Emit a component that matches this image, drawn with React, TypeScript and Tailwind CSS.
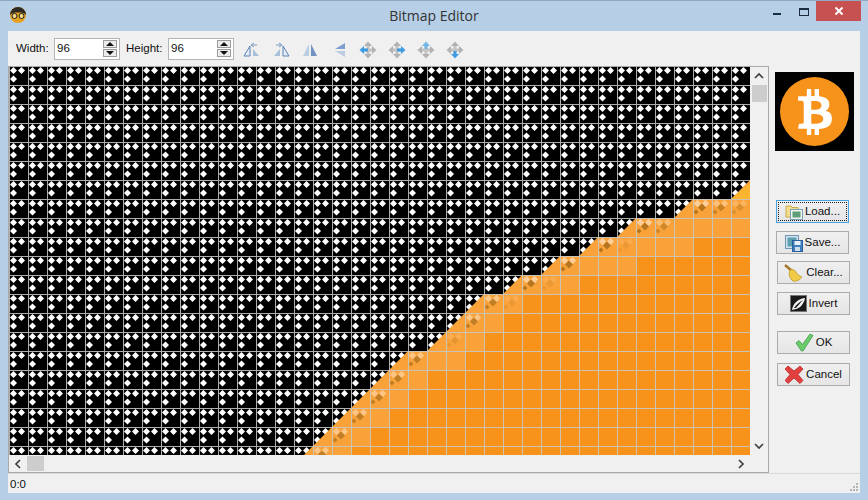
import React from 'react';
import { FaBtc } from 'react-icons/fa';

const CELL = 19;
const ROW_Y = (r: number) => CELL * r - 1;

// first column of the orange edge per row (r = index + 6)
const edge = [38, 35, 32, 30, 28, 26, 24, 23, 22, 20, 19, 18, 17, 16, 15];

// [row, col, strength] half transparent cells along the edge
const half: [number, number, number][] = [
  [7, 36, 1], [7, 37, 0.7], [7, 38, 0.4], [8, 33, 1], [8, 34, 0.6], [9, 31, 1], [9, 32, 0.2],
  [10, 29, 1], [11, 27, 1], [11, 28, 0.2], [12, 25, 0.8], [12, 26, 0.2], [13, 24, 0.8], [14, 23, 0.25],
  [15, 21, 0.8], [16, 20, 0.8], [17, 19, 0.8], [18, 18, 0.8], [19, 17, 0.8], [20, 16, 0.8],
];

// [row, first full orange column]
const full: [number, number][] = [
  [9, 36], [10, 33], [11, 30], [12, 27], [13, 26], [14, 25], [15, 24], [16, 22], [17, 21], [18, 20], [19, 19], [20, 18],
];

const diamond = (x: number, y: number, r: number) => `${x},${y - r} ${x + r},${y} ${x},${y + r} ${x - r},${y}`;

const edgePoints = () => {
  const pts: string[] = [];
  for (let i = edge.length - 1; i >= 0; i--) {
    const r = i + 6;
    pts.push(`${edge[i] * CELL},${ROW_Y(r + 1)}`);
    pts.push(`${(edge[i] + 1) * CELL},${ROW_Y(r)}`);
  }
  pts.push(`741,${ROW_Y(6)}`);
  pts.push('741,388');
  pts.push(`${edge[14] * CELL},388`);
  return pts.join(' ');
};

const BitmapGrid = () => (
  <svg width={741} height={388} className="block shrink-0">
    <defs>
      <pattern id="cells" x={0} y={-1} width={CELL} height={CELL} patternUnits="userSpaceOnUse">
        <rect width={CELL} height={CELL} fill="#000" />
        <polygon points={diamond(4.5, 4.5, 3.5)} fill="#fff" />
        <polygon points={diamond(12.5, 4.5, 3.5)} fill="#fff" />
        <polygon points={diamond(4.5, 13, 3.5)} fill="#fff" />
      </pattern>
      <pattern id="lines" x={0} y={-1} width={CELL} height={CELL} patternUnits="userSpaceOnUse">
        <rect width={CELL} height={1} fill="#aeaeae" />
        <rect width={1} height={CELL} fill="#aeaeae" />
      </pattern>
      <pattern id="linesLight" x={0} y={-1} width={CELL} height={CELL} patternUnits="userSpaceOnUse">
        <rect width={CELL} height={1} fill="#cbc3b6" />
        <rect width={1} height={CELL} fill="#cbc3b6" />
      </pattern>
    </defs>
    <rect width={741} height={388} fill="url(#cells)" />
    <rect width={741} height={388} fill="url(#lines)" />
    <polygon points={edgePoints()} fill="#f9a23a" />
    <polygon points={`${38 * CELL},${ROW_Y(7)} 741,${ROW_Y(6) + 3} 741,${ROW_Y(7)}`} fill="#fdb52f" />
    {full.map(([r, c]) => (
      <rect key={r} x={c * CELL} y={ROW_Y(r)} width={741 - c * CELL} height={CELL} fill="#f7931a" />
    ))}
    {half.map(([r, c, s]) => (
      <g key={`${r}-${c}`} transform={`translate(${c * CELL},${ROW_Y(r)})`} opacity={s}>
        <polygon points={diamond(4.5, 4.5, 3.7)} fill="#ffcf9a" />
        <polygon points={diamond(12.5, 4.5, 3.7)} fill="#ffcf9a" />
        <polygon points={diamond(9, 8.5, 4)} fill="#b5761f" />
        <polygon points={diamond(3, 13, 2.5)} fill="#b5761f" />
      </g>
    ))}
    <polygon points={edgePoints()} fill="url(#linesLight)" />
  </svg>
);

const Chevron = ({ dir }: { dir: 'up' | 'down' | 'left' | 'right' }) => {
  const points = {
    up: '1,7 5,3 9,7',
    down: '1,3 5,7 9,3',
    left: '7,1 3,5 7,9',
    right: '3,1 7,5 3,9',
  }[dir];
  return (
    <svg width={10} height={10} viewBox="0 0 10 10">
      <polyline points={points} fill="none" stroke="#404040" strokeWidth={1.7} />
    </svg>
  );
};

const Spin = ({ label, labelClass }: { label: string; labelClass: string }) => (
  <div className="flex items-center">
    <span className={labelClass}>{label}</span>
    <div className="flex items-center justify-between w-[66px] h-[22px] bg-white border border-[#b4b4b4] pl-[2px] pr-[2px]">
      <span>96</span>
      <div className="flex flex-col gap-[1px]">
        <div className="w-[14px] h-[8px] flex items-center justify-center border border-[#9a9a9a] bg-[#ececec]">
          <div className="w-0 h-0 border-x-[4px] border-x-transparent border-b-[4px] border-b-[#111]" />
        </div>
        <div className="w-[14px] h-[8px] flex items-center justify-center border border-[#9a9a9a] bg-[#ececec]">
          <div className="w-0 h-0 border-x-[4px] border-x-transparent border-t-[4px] border-t-[#111]" />
        </div>
      </div>
    </div>
  </div>
);

const FlipIcon = ({ kind }: { kind: number }) => (
  <svg width={18} height={18} viewBox="0 0 18 18">
    {kind === 0 && (
      <g>
        <polygon points="7,5 7,15 1,15" fill="#e8eef6" stroke="#5b80b8" />
        <polygon points="10,8 10,15 16,15" fill="#a9c0da" />
        <path d="M8 4h6M11 2l-3 2 3 2" fill="none" stroke="#7d9cc4" />
      </g>
    )}
    {kind === 1 && (
      <g>
        <polygon points="11,5 11,15 17,15" fill="#e8eef6" stroke="#5b80b8" />
        <polygon points="8,8 8,15 2,15" fill="#a9c0da" />
        <path d="M4 4h6M7 2l3 2-3 2" fill="none" stroke="#7d9cc4" />
      </g>
    )}
    {kind === 2 && (
      <g>
        <polygon points="8,3 8,15 2,15" fill="#b9cde3" />
        <polygon points="10,3 10,15 16,15" fill="#6f92c0" />
      </g>
    )}
    {kind === 3 && (
      <g>
        <polygon points="15,2 15,8 5,8" fill="#7f9fd0" />
        <polygon points="15,10 15,16 5,10" fill="#bccde3" />
      </g>
    )}
  </svg>
);

const MoveIcon = ({ dir }: { dir: 'left' | 'right' | 'up' | 'down' }) => {
  const grey = '#b2b2b2';
  const blue = '#3f9be2';
  return (
    <svg width={18} height={18} viewBox="0 0 18 18">
      <path d="M7.5 5h3v8h-3zM5 7.5h8v3H5z" fill="#c4c4c4" />
      <polygon points="9,0.5 13,5 5,5" fill={dir === 'up' ? '#6fb6e4' : grey} />
      <polygon points="9,17.5 13,13 5,13" fill={dir === 'down' ? blue : grey} />
      <polygon points="0.5,9 5,5 5,13" fill={dir === 'left' ? blue : grey} />
      <polygon points="17.5,9 13,5 13,13" fill={dir === 'right' ? blue : grey} />
      {dir === 'left' && <rect x={4} y={7.5} width={5} height={3} fill={blue} />}
      {dir === 'right' && <rect x={9} y={7.5} width={5} height={3} fill={blue} />}
      {dir === 'up' && <rect x={7.5} y={4} width={3} height={4} fill="#6fb6e4" />}
      {dir === 'down' && <rect x={7.5} y={10} width={3} height={4} fill={blue} />}
    </svg>
  );
};

const LoadIcon = () => (
  <svg width={18} height={18} viewBox="0 0 18 18">
    <path d="M1 3h5l1 1.500h6V14H1z" fill="#f6dd8c" stroke="#c9a94e" />
    <rect x={5.5} y={6.5} width={12} height={10} fill="#eef4f0" stroke="#7f9fb5" />
    <rect x={7.5} y={8.5} width={8} height={6} fill="#5f9e78" />
  </svg>
);

const SaveIcon = () => (
  <svg width={18} height={18} viewBox="0 0 18 18">
    <rect x={0.5} y={1.5} width={13} height={13} fill="#cfe2ee" stroke="#6f95b5" />
    <rect x={2.5} y={3.5} width={9} height={9} fill="#5e9fb0" />
    <rect x={7.5} y={6.5} width={10} height={11} fill="#3f7fc0" stroke="#2b5f9a" />
    <rect x={9.5} y={7} width={6} height={4} fill="#e8f0f8" />
    <rect x={10} y={13} width={5} height={4} fill="#cfdcec" />
  </svg>
);

const BroomIcon = () => (
  <svg width={20} height={20} viewBox="0 0 20 20">
    <path d="M1 2l7 6" stroke="#a5762a" strokeWidth={2.4} fill="none" />
    <path d="M6 7c3-1 5 0 6 2 1 2 3 4 6 5-2 3-6 5-9 4-3-2-5-7-3-11z" fill="#f1cb45" stroke="#b88f22" strokeWidth={0.7} />
  </svg>
);

const InvertIcon = () => (
  <svg width={17} height={17} viewBox="0 0 17 17">
    <rect x={0.5} y={0.5} width={16} height={16} fill="#1a1a1a" stroke="#777" />
    <path d="M2 15c1-6 5-11 13-12-1 6-5 10-9 11-1.500.3-3 .5-4 1z" fill="#f4f4f4" />
    <path d="M4 13c2-3 5-6 9-8-3 3-5 6-7 8z" fill="#222" />
  </svg>
);

const OkIcon = () => (
  <svg width={19} height={19} viewBox="0 0 19 19">
    <path d="M1 10l3-2.500 3.500 4L15 1l3 1.500L8 18h-1.500z" fill="#6ccb6a" stroke="#3d9a48" strokeWidth={0.8} />
  </svg>
);

const CancelIcon = () => (
  <svg width={19} height={19} viewBox="0 0 19 19">
    <path d="M3 1l6 5 6-5 3 3-5 5.500 5 6-3 3-6-5.500-6 5.500-3-3 5-6-5-5.500z" fill="#e2403f" stroke="#b9292c" strokeWidth={0.8} />
  </svg>
);

const SideButton = ({ icon, label, className, focus }: { icon: React.ReactNode; label: string; className: string; focus?: boolean }) => (
  <button
    className={`relative flex items-center justify-center gap-[2px] w-[73px] h-[23px] border bg-gradient-to-b from-[#f0f0f0] to-[#e5e5e5] ${focus ? 'border-[#4aa3df]' : 'border-[#acacac]'} ${className}`}
  >
    {focus && <span className="absolute inset-[1px] border border-dotted border-[#222]" />}
    {icon}
    <span>{label}</span>
  </button>
);

export default function App() {
  return (
    <div className="w-[868px] h-[500px] flex flex-col overflow-hidden bg-[#b6cfe6] border-t border-[#8fa9c4] text-[11.5px] text-[#111] font-['Liberation_Sans',sans-serif]">
      {/* title bar */}
      <div className="grid grid-cols-[1fr_auto_1fr] items-center h-[30px] shrink-0">
        <div className="pl-[9px] pb-[2px]">
          <svg width={18} height={18} viewBox="0 0 18 18">
            <circle cx={9} cy={9} r={8} fill="#e6a21e" />
            <path d="M1 9a8 8 0 0 1 16 0c-2-2-4-2.500-8-2.500S3 7 1 9z" fill="#2f2a22" />
            <circle cx={5.500} cy={10} r={2.500} fill="#f5d98a" stroke="#222" />
            <circle cx={12.500} cy={10} r={2.500} fill="#f5d98a" stroke="#222" />
          </svg>
        </div>
        <div className="text-[14px] text-[#333] pb-[1px] font-['Open_Sans',sans-serif]">Bitmap Editor</div>
        <div className="flex items-start justify-end h-full pr-[7px]">
          <div className="flex items-center justify-start w-[45px] h-[20px] pl-[27px]">
            <div className="w-[8px] h-[2px] mt-[5px] bg-[#1c2c40]" />
          </div>
          <div className="flex items-center justify-center w-[26px] h-[20px]">
            <div className="w-[10px] h-[8px] mt-[2px] border border-t-[2px] border-[#1c2c40]" />
          </div>
          <div className="flex items-center justify-center w-[45px] h-[20px] bg-[#c75050] ml-[-1px]">
            <svg width={10} height={10} viewBox="0 0 10 10">
              <path d="M1.500 1.500l7 7M8.500 1.500l-7 7" stroke="#fff" strokeWidth={2} />
            </svg>
          </div>
        </div>
      </div>

      {/* client area */}
      <div className="flex flex-col h-[462px] mx-[8px] bg-[#f0f0f0] shrink-0">
        <div className="flex items-center h-[35px] shrink-0 pl-[8px]">
          <Spin label="Width:" labelClass="w-[38px]" />
          <Spin label="Height:" labelClass="w-[42px] ml-[6px]" />
          <div className="flex items-center gap-[11px] ml-[9px] pt-[2px]">
            <FlipIcon kind={0} />
            <FlipIcon kind={1} />
            <FlipIcon kind={2} />
            <FlipIcon kind={3} />
            <MoveIcon dir="left" />
            <MoveIcon dir="right" />
            <MoveIcon dir="up" />
            <MoveIcon dir="down" />
          </div>
        </div>

        <div className="flex flex-1 min-h-0">
          <div className="flex flex-col w-[761px] h-[407px] border border-[#a8a8a8] shrink-0">
            <div className="flex">
              <BitmapGrid />
              <div className="flex flex-col w-[18px] h-[388px] items-center">
                <div className="flex items-center justify-center h-[18px]">
                  <Chevron dir="up" />
                </div>
                <div className="w-[15px] h-[17px] bg-[#cdcdcd]" />
                <div className="flex-1" />
                <div className="flex items-center justify-center h-[18px]">
                  <Chevron dir="down" />
                </div>
              </div>
            </div>
            <div className="flex items-center h-[17px] pr-[18px]">
              <div className="flex items-center justify-center w-[18px]">
                <Chevron dir="left" />
              </div>
              <div className="w-[17px] h-[15px] bg-[#cdcdcd]" />
              <div className="flex-1" />
              <div className="flex items-center justify-center w-[18px]">
                <Chevron dir="right" />
              </div>
            </div>
          </div>

          <div className="flex flex-col flex-1 pl-[6px]">
            <div className="flex items-center justify-center w-[79px] h-[79px] mt-[6px] bg-black">
              <div className="flex items-center justify-center w-[69px] h-[69px] rounded-full bg-[#f7931a]">
                <FaBtc size={46} color="#fff" />
              </div>
            </div>
            <SideButton icon={<LoadIcon />} label="Load..." className="mt-[49px] ml-[1px]" focus />
            <SideButton icon={<SaveIcon />} label="Save..." className="mt-[8px] ml-[1px]" />
            <SideButton icon={<BroomIcon />} label="Clear..." className="mt-[7px] ml-[2px]" />
            <SideButton icon={<InvertIcon />} label="Invert" className="mt-[8px] ml-[2px]" />
            <SideButton icon={<OkIcon />} label="OK" className="mt-[16px] ml-[2px]" />
            <SideButton icon={<CancelIcon />} label="Cancel" className="mt-[9px] ml-[2px]" />
          </div>
        </div>

        <div className="relative flex items-center h-[20px] shrink-0 border-t border-[#d9d9d9] pl-[2px] pt-[2px]">
          <span>0:0</span>
          <svg width={10} height={10} viewBox="0 0 10 10" className="absolute right-[1px] bottom-[1px]">
            <g fill="#b5b5b5">
              <rect x={7} y={1} width={2} height={2} />
              <rect x={4} y={4} width={2} height={2} />
              <rect x={7} y={4} width={2} height={2} />
              <rect x={1} y={7} width={2} height={2} />
              <rect x={4} y={7} width={2} height={2} />
              <rect x={7} y={7} width={2} height={2} />
            </g>
          </svg>
        </div>
      </div>
    </div>
  );
}
